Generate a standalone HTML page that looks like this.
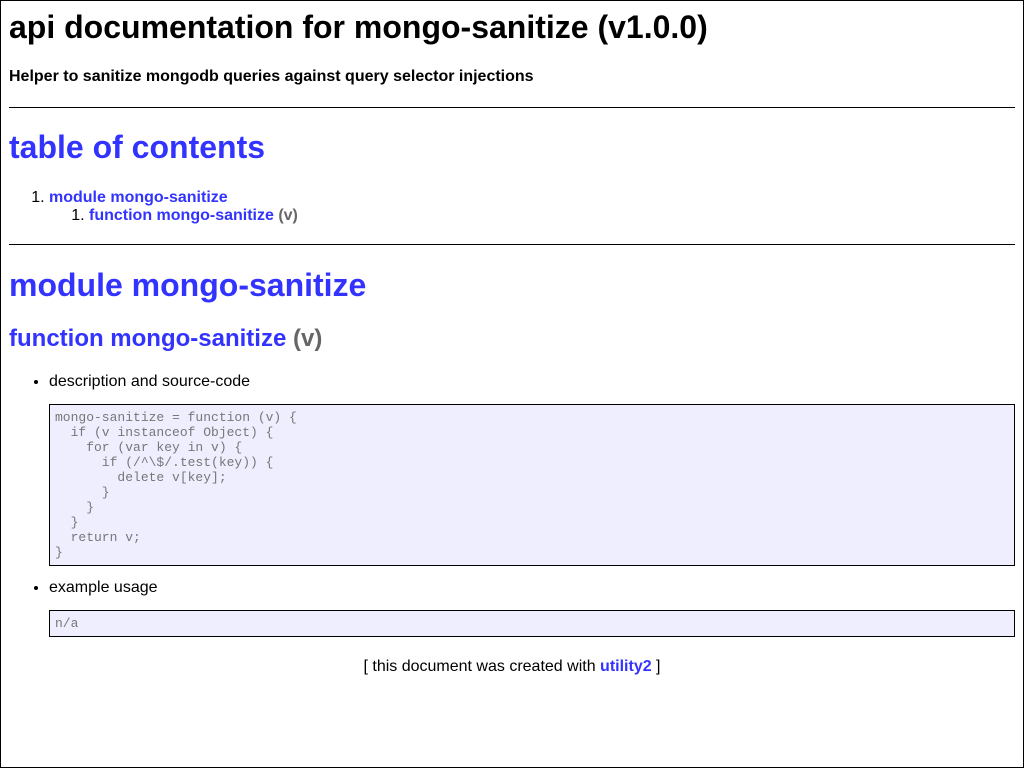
<!DOCTYPE html>
<html><head><meta charset="utf-8"><style>
html,body{margin:0;padding:0;background:#fff}
body{font-family:"Liberation Sans",Arial,sans-serif;color:#000}
.wrap{box-sizing:border-box;width:1024px;height:768px;border:1px solid #000;padding:0 8px;overflow:hidden}
a{color:#33f;font-weight:bold;text-decoration:none}
.sig{color:#666;font-weight:bold}
h1{font-size:32px;line-height:37px;margin:8px 0 0}
h3{font-size:16px;line-height:18px;margin:21px 0 0}
hr{border:0;border-top:1px solid #000;margin:0;height:0}
.h2big{font-size:32px;line-height:37px;margin:0;font-weight:bold}
h2.fn{font-size:24px;line-height:28px;margin:0}
ol{margin:0;padding-left:40px;line-height:18px}
ul{margin:0;padding-left:40px;line-height:18px}
pre{background:#eef;border:1px solid #000;color:#777;padding:5px;margin:0;font-family:"Liberation Mono",monospace;font-size:13px;line-height:15px;white-space:pre}
.footer{text-align:center;line-height:18px}
</style></head><body><div class="wrap">
<h1>api documentation for mongo-sanitize (v1.0.0)</h1>
<h3 style="margin-top:22px">Helper to sanitize mongodb queries against query selector injections</h3>
<hr style="margin-top:21px">
<div class="h2big" style="margin-top:21px"><a href="#a">table of contents</a></div>
<ol style="margin-top:23px"><li><a href="#a">module mongo-sanitize</a>
<ol><li><a href="#a">function mongo-sanitize</a> <span class="sig">(v)</span></li></ol></li></ol>
<hr style="margin-top:19px">
<div class="h2big" style="margin-top:22px"><a href="#a">module mongo-sanitize</a></div>
<h2 class="fn" style="margin-top:21px"><a href="#a">function mongo-sanitize</a> <span class="sig">(v)</span></h2>
<ul style="margin-top:20px"><li>description and source-code
<pre style="margin-top:13px">mongo-sanitize = function (v) {
  if (v instanceof Object) {
    for (var key in v) {
      if (/^\$/.test(key)) {
        delete v[key];
      }
    }
  }
  return v;
}</pre></li>
<li style="margin-top:13px">example usage
<pre style="margin-top:13px">n/a</pre></li></ul>
<div class="footer" style="margin-top:21px">[ this document was created with <a href="#a">utility2</a> ]</div>
</div></body></html>
